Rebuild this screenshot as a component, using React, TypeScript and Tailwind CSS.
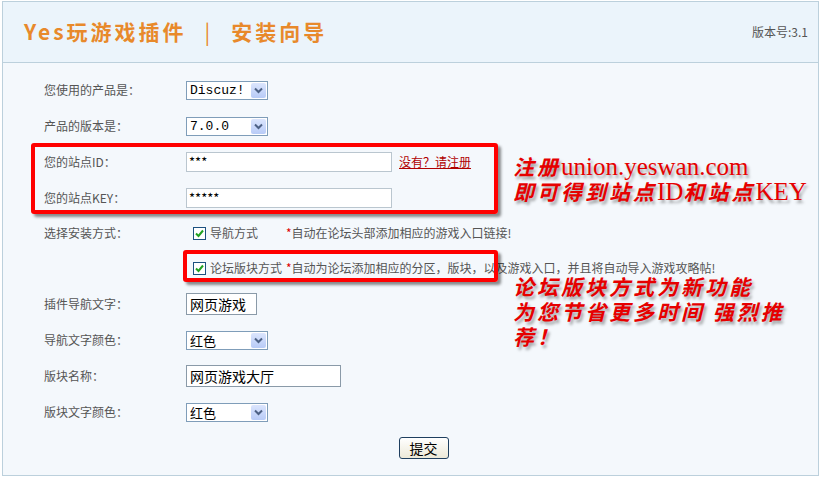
import React from 'react'

const cjk = { fontFamily: '"Noto Sans CJK SC", "Liberation Sans", sans-serif' }
const serif = { fontFamily: '"Liberation Serif", serif' }

const Select = ({ value, mono }: { value: string; mono?: boolean }) => (
  <div className="flex h-[19px] w-[82px] items-center justify-between border border-[#7f9db9] bg-white pl-[3px] pr-[1px]">
    <span
      className="text-[13px] leading-none text-black"
      style={mono ? { fontFamily: '"Liberation Mono", monospace' } : cjk}
    >
      {value}
    </span>
    <span className="flex h-[15px] w-[15px] items-center justify-center rounded-[2px] bg-gradient-to-b from-[#dbe5fd] to-[#b8cbf7]">
      <svg width="9" height="7" viewBox="0 0 9 7">
        <path d="M1 1.5 L4.5 5 L8 1.5" stroke="#4d6185" strokeWidth="2" fill="none" />
      </svg>
    </span>
  </div>
)

const Check = () => (
  <span className="flex h-[13px] w-[13px] items-center justify-center border border-[#1c5180] bg-white">
    <svg width="9" height="9" viewBox="0 0 9 9">
      <path d="M1 4.5 L3.5 7 L8 1.5" stroke="#21a121" strokeWidth="2" fill="none" />
    </svg>
  </span>
)

const Row = ({ label, h = 'h-[36px]', children }: { label: string; h?: string; children?: React.ReactNode }) => (
  <div className={`flex items-center ${h}`}>
    <div className="w-[142px] text-[12px] text-[#555]">{label}</div>
    <div className="flex items-center">{children}</div>
  </div>
)

const Note = ({ children }: { children: React.ReactNode }) => (
  <div
    className="text-[21px] font-bold italic leading-[25px] tracking-[3px] text-[#e60000]"
    style={{ ...cjk, textShadow: '2px 3px 3px rgba(0,0,0,0.35)' }}
  >
    {children}
  </div>
)

const Latin = ({ children }: { children: React.ReactNode }) => (
  <span className="text-[25px] font-normal not-italic tracking-normal" style={serif}>
    {children}
  </span>
)

export default function App() {
  return (
    <div className="h-[477px] w-[820px] bg-white pl-[2px] pt-[1px]" style={cjk}>
      <div className="relative w-[817px] border border-[#bcd0dc] bg-[#f4f8fc]">
        <div className="flex h-[61px] items-center justify-between border-b border-[#bcd0dc] bg-[#ebf4fb] pl-[21px] pr-[10px]">
          <div className="flex items-center text-[21px] font-bold tracking-[3px] text-[#e8892b]">
            <span>Yes玩游戏插件</span>
            <span className="mx-[18px] font-normal">|</span>
            <span>安装向导</span>
          </div>
          <span className="text-[12px] text-[#555]">版本号:3.1</span>
        </div>

        <div className="px-[41px] pt-[9px] pb-[16px]">
          <Row label="您使用的产品是：">
            <Select value="Discuz!" mono />
          </Row>
          <Row label="产品的版本是：">
            <Select value="7.0.0" mono />
          </Row>
          <Row label="您的站点ID：">
            <div className="flex h-[20px] w-[206px] items-center border border-[#bac6cf] bg-white px-[2px] text-[13px] text-black">***</div>
            <a className="ml-[7px] text-[12px] text-[#b00000] underline">没有？请注册</a>
          </Row>
          <Row label="您的站点KEY：">
            <div className="flex h-[20px] w-[206px] items-center border border-[#bac6cf] bg-white px-[2px] text-[13px] text-black">*****</div>
          </Row>
          <Row label="选择安装方式：" h="h-[34px]">
            <div className="ml-[7px] flex items-center gap-[4px] text-[12px] text-[#555]">
              <Check />
              <span className="w-[72px]">导航方式</span>
              <span>
                <span className="text-[#d00]">*</span>自动在论坛头部添加相应的游戏入口链接!
              </span>
            </div>
          </Row>
          <Row label="">
            <div className="ml-[7px] flex items-center gap-[4px] text-[12px] text-[#555]">
              <Check />
              <span className="w-[72px]">论坛版块方式</span>
              <span>
                <span className="text-[#d00]">*</span>自动为论坛添加相应的分区，版块，以及游戏入口，并且将自动导入游戏攻略帖!
              </span>
            </div>
          </Row>
          <Row label="插件导航文字：">
            <div className="flex h-[22px] w-[71px] items-center border border-[#8a9aa8] bg-white px-[3px] text-[14px] text-black">网页游戏</div>
          </Row>
          <Row label="导航文字颜色：">
            <Select value="红色" />
          </Row>
          <Row label="版块名称：">
            <div className="flex h-[22px] w-[155px] items-center border border-[#8a9aa8] bg-white px-[3px] text-[14px] text-black">网页游戏大厅</div>
          </Row>
          <Row label="版块文字颜色：">
            <Select value="红色" />
          </Row>
          <div className="mt-[7px] flex justify-center pl-[26px]">
            <button className="h-[22px] w-[50px] rounded-[3px] border border-[#1f3f5f] bg-gradient-to-b from-white to-[#ece9d8] text-[14px] leading-none text-black">
              提交
            </button>
          </div>
        </div>

        {/* red highlight frames and notes drawn over the form */}
        <div className="absolute left-[28px] top-[141px] h-[71px] w-[467px] rounded-[3px] border-[4px] border-[#ff0000] shadow-[3px_3px_3px_rgba(0,0,0,0.45)]" />
        <div className="absolute left-[180px] top-[248px] h-[32px] w-[315px] rounded-[3px] border-[4px] border-[#ff0000] shadow-[3px_3px_3px_rgba(0,0,0,0.45)]" />

        <div className="absolute left-[510px] top-[152px]">
          <Note>
            注册<Latin>union.yeswan.com</Latin>
            <br />
            即可得到站点<Latin>ID</Latin>和站点<Latin>KEY</Latin>
          </Note>
        </div>
        <div className="absolute left-[510px] top-[272px]">
          <Note>
            论坛版块方式为新功能
            <br />
            为您节省更多时间 强烈推
            <br />
            荐！
          </Note>
        </div>
      </div>
    </div>
  )
}
